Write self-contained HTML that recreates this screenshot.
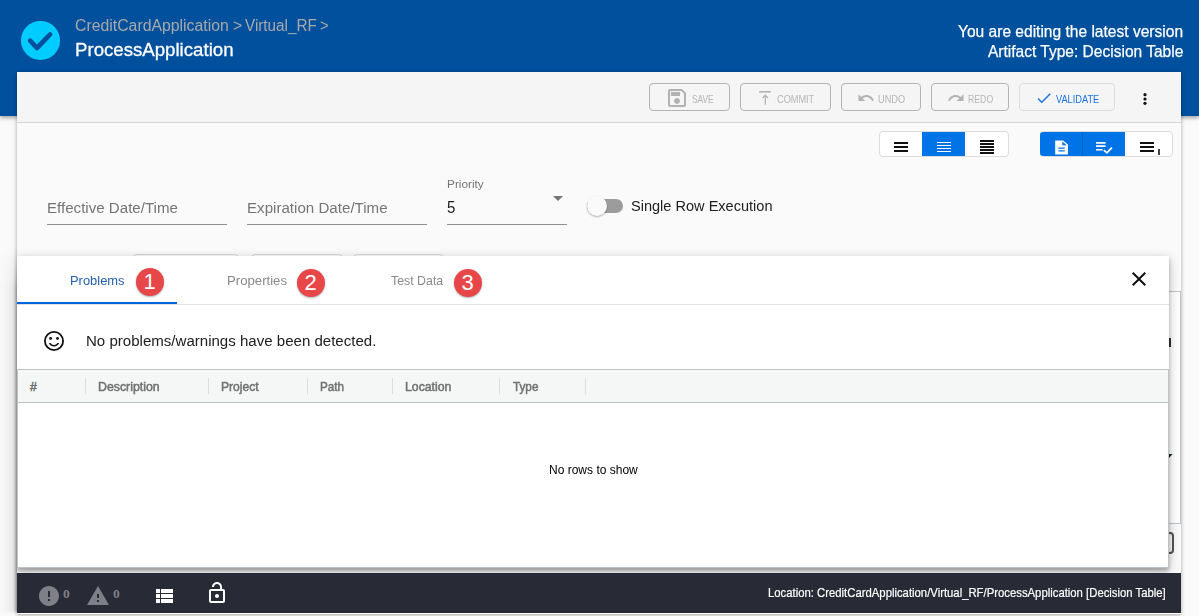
<!DOCTYPE html>
<html lang="en"><head><meta charset="utf-8"><title>ProcessApplication - Decision Table</title>
<style>
html,body{margin:0;padding:0}
body{width:1199px;height:616px;overflow:hidden;background:#fafafa;position:relative;font-family:"Liberation Sans",sans-serif}
.abs,.t{position:absolute}
.t{white-space:nowrap;line-height:1;transform-origin:0 0;letter-spacing:0}
#header{left:0;top:0;width:1199px;height:116px;background:#00509e;box-shadow:0 2px 4px rgba(0,0,0,.35)}
#logo{left:21px;top:21px;width:38.500px;height:38.500px;border-radius:50%;background:#00ccff}
#card{left:17px;top:72px;width:1164px;height:542px;background:#fafafa;box-shadow:0 1px 4px rgba(0,0,0,.35)}
#toolbar{left:0;top:0;width:1164px;height:50px;background:#f5f5f5;border-bottom:1px solid #d6d6d6}
.btn{top:11px;height:26px;border:1px solid #b4b4b4;border-radius:4px;box-sizing:content-box}
.btn.light{border-color:#dcdcdc}
.grp{top:59px;height:24px;border:1px solid #dcdcdc;border-radius:4px;background:#fff}
.grp .seg{position:absolute;top:0;height:24px}
.blue{background:#0073e6}
.line{height:1px;background:#8f8f8f}
.ghost{top:182px;height:10px;border:1px solid #d8d8d8;border-radius:4px;background:#fafafa}
#sheet{left:0;top:246px;width:17px;height:368px;background:linear-gradient(to right,rgba(0,0,0,.008) .5px,rgba(0,0,0,.02) 4.5px,rgba(0,0,0,.04) 8.5px,rgba(0,0,0,.055) 10.5px,rgba(0,0,0,.07) 12.5px,rgba(0,0,0,.10) 13.5px,rgba(0,0,0,.14) 14.5px,rgba(0,0,0,.21) 15.5px,rgba(0,0,0,.28) 16.5px,rgba(0,0,0,.3) 17px);-webkit-mask-image:linear-gradient(to bottom,transparent 0,rgba(0,0,0,.25) 10px,#000 44px,#000 364px,transparent 368px);mask-image:linear-gradient(to bottom,transparent 0,rgba(0,0,0,.25) 10px,#000 44px,#000 364px,transparent 368px)}
#panel{left:17px;top:256px;width:1152px;height:312px;background:#fff;box-shadow:0 3px 10px rgba(0,0,0,.27),0 3px 3px rgba(0,0,0,.2);clip-path:inset(-20px -20px -20px 0)}
#tabline{left:0;top:48px;width:1152px;height:1px;background:#e2e2e2}
#ink{left:0;top:46px;width:160px;height:2px;background:#0565e0}
.badge{width:28px;height:28px;border-radius:50%;background:#e8474a;box-shadow:0 1px 2px rgba(0,40,40,.35);color:#fff;font-size:22px;line-height:28px;text-align:center}
#grid{left:0;top:113px;width:1152px;height:199px;border:1px solid #bdc3c7;box-sizing:border-box}
#ghead{left:0;top:0;width:1150px;height:32px;background:#f5f7f7;border-bottom:1px solid #bdc3c7}
.sep{top:8px;width:1px;height:16px;background:#dadde0}
#status{left:17px;top:573px;width:1164px;height:40px;background:#282a36}
svg{position:absolute;overflow:visible}

</style></head>
<body>
<div id="header" class="abs">
  <div id="logo" class="abs"><svg width="38" height="38" viewBox="0 0 38 38" style="left:0;top:0"><path d="M9.100 19.700L15.900 27L29.100 13.400" fill="none" stroke="#00509e" stroke-width="4.700" stroke-linecap="round" stroke-linejoin="round"/></svg></div>
</div>
<div id="card" class="abs">
  <div id="toolbar" class="abs">
    <div class="btn abs" style="left:632px;width:79px"></div>
    <div class="btn abs" style="left:723px;width:89px"></div>
    <div class="btn abs" style="left:824px;width:78px"></div>
    <div class="btn abs" style="left:914px;width:76px"></div>
    <div class="btn light abs" style="left:1002px;width:94px"></div>
    <svg width="24" height="24" viewBox="0 0 24 24" style="left:648px;top:14px" fill="#b2b2b2"><path d="M17 3H5c-1.11 0-2 .9-2 2v14c0 1.1.89 2 2 2h14c1.1 0 2-.9 2-2V7l-4-4zm2 16H5V5h11.17L19 7.83V19zm-7-7c-1.66 0-3 1.34-3 3s1.34 3 3 3 3-1.34 3-3-1.34-3-3-3zM6 6h9v4H6z"/></svg>
    <svg width="18" height="18" viewBox="0 0 18 18" style="left:739px;top:16px" fill="none" stroke="#b2b2b2"><path d="M3.2 3.8h11.6" stroke-width="1.6"/><path d="M9.3 7.2v9.500M6.600 10l2.700-2.800 2.700 2.800" stroke-width="1.2"/></svg>
    <svg width="18" height="18" viewBox="0 0 24 24" style="left:839.5px;top:17px" fill="#b2b2b2"><path d="M12.5 8c-2.65 0-5.05.99-6.9 2.6L2 7v9h9l-3.62-3.62c1.39-1.16 3.16-1.88 5.12-1.88 3.54 0 6.55 2.31 7.6 5.5l2.37-.78C21.08 11.03 17.15 8 12.5 8z"/></svg>
    <svg width="18" height="18" viewBox="0 0 24 24" style="left:930.1px;top:17px" fill="#b2b2b2"><path d="M18.4 10.6C16.55 8.99 14.15 8 11.5 8c-4.65 0-8.58 3.03-9.96 7.22L3.9 16c1.05-3.19 4.05-5.5 7.6-5.5 1.95 0 3.73.72 5.12 1.88L13 16h9V7l-3.6 3.6z"/></svg>
    <svg width="18" height="18" viewBox="0 0 24 24" style="left:1018.1px;top:17.1px" fill="#1a73e8"><path d="M9 16.17L4.83 12l-1.42 1.41L9 19 21 7l-1.41-1.41z"/></svg>
    <svg width="18" height="18" viewBox="0 0 18 18" style="left:1118.8px;top:18px" fill="#111"><circle cx="9" cy="4.7" r="1.6"/><circle cx="9" cy="9" r="1.6"/><circle cx="9" cy="13.3" r="1.6"/></svg>
  </div>
  <div class="grp abs" style="left:862px;width:128px">
    <div class="seg blue" style="left:42px;width:43px"></div>
    <div class="abs" style="left:14px;top:10px;width:14px;height:2px;background:#111"></div><div class="abs" style="left:14px;top:14px;width:14px;height:2px;background:#111"></div><div class="abs" style="left:14px;top:18px;width:14px;height:2px;background:#111"></div>
    <div class="abs" style="left:57px;top:10px;width:14px;height:1px;background:#fff"></div><div class="abs" style="left:57px;top:13px;width:14px;height:1px;background:#fff"></div><div class="abs" style="left:57px;top:16px;width:14px;height:1px;background:#fff"></div><div class="abs" style="left:57px;top:19px;width:14px;height:1px;background:#fff"></div>
    <div class="abs" style="left:100px;top:8px;width:14px;height:2px;background:#111"></div><div class="abs" style="left:100px;top:11px;width:14px;height:2px;background:#111"></div><div class="abs" style="left:100px;top:14px;width:14px;height:2px;background:#111"></div><div class="abs" style="left:100px;top:17px;width:14px;height:2px;background:#111"></div><div class="abs" style="left:100px;top:20px;width:14px;height:2px;background:#111"></div>
  </div>
  <div class="grp abs" style="left:1023px;width:131px">
    <div class="seg blue" style="left:-1px;width:85px;border-radius:3px 0 0 3px"></div>
    <div class="seg" style="left:41px;width:1px;background:#0062c4"></div>
    <svg width="19.1" height="16.8" viewBox="0 0 24 24" preserveAspectRatio="none" style="left:10.6px;top:6.6px" fill="#fff"><path fill-rule="evenodd" d="M4 2h10l6 6v14H4V2zm9 1.500V9h5.500L13 3.500zM8 12v2h8v-2H8zm0 4v2h8v-2H8z"/></svg>
    <svg width="20" height="16" viewBox="0 0 20 16" style="left:53px;top:8px" fill="none" stroke="#fff"><path d="M2 2.9h9.6M2 6.1h9.6M2 9.7h6.5" stroke-width="1.6"/><path d="M9.8 10.2l3.1 2.6l5-5.2" stroke-width="1.7"/></svg>
    <div class="abs" style="left:99px;top:10px;width:14px;height:2px;background:#111"></div><div class="abs" style="left:99px;top:14px;width:14px;height:2px;background:#111"></div><div class="abs" style="left:99px;top:18px;width:14px;height:2px;background:#111"></div>
    <div class="abs" style="left:117px;top:16.5px;width:2px;height:4px;background:#444"></div><div class="abs" style="left:117px;top:21.30000000000001px;width:2px;height:1.4px;background:#444"></div>
  </div>
  <div class="line abs" style="left:30px;top:152px;width:180px"></div>
  <div class="line abs" style="left:230px;top:152px;width:180px"></div>
  <div class="line abs" style="left:430px;top:152px;width:120px"></div>
  <svg width="10" height="5" viewBox="0 0 10 5" style="left:536px;top:124px"><path d="M0 0h10L5 5z" fill="#757575"/></svg>
  <div class="abs" style="left:570px;top:127px;width:36px;height:14px;border-radius:7px;background:#9c9c9c"></div>
  <div class="abs" style="left:570px;top:124px;width:20px;height:20px;border-radius:50%;background:#fafafa;box-shadow:0 1px 2px rgba(0,0,0,.3)"></div>
  <div class="ghost abs" style="left:116px;width:104px"></div>
  <div class="ghost abs" style="left:234px;width:90px"></div>
  <div class="ghost abs" style="left:336px;width:89px"></div>
</div>
<div class="abs" style="left:1100px;top:291px;width:79px;height:231px;border:1px solid #bdc3c7;background:#fff"></div>
<div class="abs" style="left:1165px;top:338px;width:6px;height:9px;border:2px solid #333;border-left:0;box-sizing:border-box"></div>
<svg width="4" height="4" viewBox="0 0 4 4" style="left:1169px;top:454px"><path d="M0 0h3.600L0 4z" fill="#223"/></svg>
<div class="abs" style="left:1140px;top:532px;width:30px;height:18px;border:2px solid #555;border-radius:4px"></div>
<div id="sheet" class="abs"></div>
<div id="panel" class="abs">
  <div id="tabline" class="abs"></div>
  <div id="ink" class="abs"></div>
  <div class="badge abs" style="left:118.5px;top:11.5px">1</div>
  <div class="badge abs" style="left:279.5px;top:12.5px">2</div>
  <div class="badge abs" style="left:436.7px;top:12.5px">3</div>
  <svg width="24" height="24" viewBox="0 0 24 24" style="left:25px;top:73px"><circle cx="12" cy="12" r="9.100" fill="none" stroke="#111" stroke-width="1.800"/><circle cx="8.600" cy="9.400" r="1.450" fill="#111"/><circle cx="15.500" cy="9.400" r="1.450" fill="#111"/><path d="M12 16c-1.480 0-2.750-.81-3.450-2H6.880c.8 2.050 2.790 3.500 5.120 3.500s4.320-1.450 5.120-3.500h-1.670c-.7 1.190-1.970 2-3.450 2z" fill="#111"/></svg>
  <svg width="24" height="24" viewBox="0 0 24 24" style="left:1110px;top:11px"><path d="M19 6.410L17.590 5 12 10.590 6.410 5 5 6.410 10.590 12 5 17.590 6.410 19 12 13.410 17.590 19 19 17.590 13.410 12z" fill="#111"/></svg>
  <div id="grid" class="abs">
  <div id="ghead" class="abs">
      <div class="sep abs" style="left:67px"></div>
      <div class="sep abs" style="left:190px"></div>
      <div class="sep abs" style="left:289px"></div>
      <div class="sep abs" style="left:374px"></div>
      <div class="sep abs" style="left:481px"></div>
      <div class="sep abs" style="left:567px"></div>
  </div>
  </div>
</div>
<div class="abs" style="left:17px;top:613px;width:1164px;height:1px;background:#fff"></div>
<div id="status" class="abs">
  <svg width="24" height="24" viewBox="0 0 24 24" style="left:19.5px;top:11px" fill="#7f8087"><path d="M12 2C6.480 2 2 6.480 2 12s4.480 10 10 10 10-4.480 10-10S17.520 2 12 2zm1 15h-2v-2h2v2zm0-4h-2V7h2v6z"/></svg>
  <svg width="24" height="24" viewBox="0 0 24 24" style="left:69.3px;top:10.8px" fill="#7f8087"><path d="M1 21h22L12 2 1 21zm12-3h-2v-2h2v2zm0-4h-2v-4h2v4z"/></svg>
  <svg width="24" height="24" viewBox="0 0 24 24" style="left:134.5px;top:10.5px" fill="#fff"><path d="M4 14h4v-4H4v4zm0 5h4v-4H4v4zM4 9h4V5H4v4zm5 5h12v-4H9v4zm0 5h12v-4H9v4zM9 5v4h12V5H9z"/></svg>
  <svg width="24" height="24" viewBox="0 0 24 24" style="left:187.5px;top:8px" fill="#fff"><path d="M12 17c1.100 0 2-.9 2-2s-.9-2-2-2-2 .9-2 2 .9 2 2 2zm6-9h-1V6c0-2.760-2.240-5-5-5S7 3.240 7 6h1.900c0-1.710 1.390-3.100 3.100-3.100 1.710 0 3.100 1.390 3.100 3.100v2H6c-1.100 0-2 .9-2 2v10c0 1.100.9 2 2 2h12c1.100 0 2-.9 2-2V10c0-1.100-.9-2-2-2zm0 12H6V10h12v10z"/></svg>
</div>

<div id="texts">
<span class="t" id="t0" style="left:75.2px;top:17px;font-size:17.3px;color:#a9a9a9;font-weight:400;transform:scaleX(0.9149);">CreditCardApplication</span>
<span class="t" id="t1" style="left:232.5px;top:17px;font-size:17.3px;color:#a9a9a9;font-weight:400;transform:scaleX(0.9200);">&gt;</span>
<span class="t" id="t2" style="left:245.0px;top:17px;font-size:17.3px;color:#a9a9a9;font-weight:400;transform:scaleX(0.8827);">Virtual_RF</span>
<span class="t" id="t3" style="left:319.5px;top:17px;font-size:17.3px;color:#a9a9a9;font-weight:400;transform:scaleX(0.8600);">&gt;</span>
<span class="t" id="t4" style="left:75.3px;top:40px;font-size:19.0px;color:#ffffff;font-weight:400;transform:scaleX(0.9809);-webkit-text-stroke:0.3px #fff;">ProcessApplication</span>
<span class="t" id="t5" style="left:958.2px;top:23px;font-size:17.0px;color:#ffffff;font-weight:400;transform:scaleX(0.9146);-webkit-text-stroke:0.25px #fff;">You are editing the latest version</span>
<span class="t" id="t6" style="left:987.8px;top:43px;font-size:17.0px;color:#ffffff;font-weight:400;transform:scaleX(0.9131);-webkit-text-stroke:0.25px #fff;">Artifact Type: Decision Table</span>
<span class="t" id="t7" style="left:692.0px;top:94px;font-size:11.5px;color:#b6b6b6;font-weight:400;transform:scaleX(0.7233);">SAVE</span>
<span class="t" id="t8" style="left:776.7px;top:94px;font-size:11.5px;color:#b6b6b6;font-weight:400;transform:scaleX(0.7979);">COMMIT</span>
<span class="t" id="t9" style="left:877.5px;top:94px;font-size:11.5px;color:#b6b6b6;font-weight:400;transform:scaleX(0.8000);">UNDO</span>
<span class="t" id="t10" style="left:967.5px;top:94px;font-size:11.5px;color:#b6b6b6;font-weight:400;transform:scaleX(0.7576);">REDO</span>
<span class="t" id="t11" style="left:1055.7px;top:94px;font-size:11.5px;color:#1a73e8;font-weight:400;transform:scaleX(0.8019);">VALIDATE</span>
<span class="t" id="t12" style="left:47.0px;top:200px;font-size:15.4px;color:#757575;font-weight:400;transform:scaleX(0.9812);">Effective Date/Time</span>
<span class="t" id="t13" style="left:247.0px;top:200px;font-size:15.4px;color:#757575;font-weight:400;transform:scaleX(0.9825);">Expiration Date/Time</span>
<span class="t" id="t14" style="left:447.3px;top:178px;font-size:11.6px;color:#757575;font-weight:400;transform:scaleX(1.0194);">Priority</span>
<span class="t" id="t15" style="left:446.8px;top:199px;font-size:16.2px;color:#212121;font-weight:400;transform:scaleX(0.9333);">5</span>
<span class="t" id="t16" style="left:631.2px;top:198px;font-size:15.4px;color:#212121;font-weight:400;transform:scaleX(0.9453);">Single Row Execution</span>
<span class="t" id="t17" style="left:69.7px;top:274px;font-size:13.4px;color:#235fab;font-weight:400;transform:scaleX(0.9649);">Problems</span>
<span class="t" id="t18" style="left:226.7px;top:274px;font-size:13.4px;color:#8a8a8a;font-weight:400;transform:scaleX(0.9836);">Properties</span>
<span class="t" id="t19" style="left:390.7px;top:274px;font-size:13.4px;color:#8a8a8a;font-weight:400;transform:scaleX(0.9228);">Test Data</span>
<span class="t" id="t20" style="left:85.9px;top:333px;font-size:15.4px;color:#212121;font-weight:400;transform:scaleX(0.9781);">No problems/warnings have been detected.</span>
<span class="t" id="t21" style="left:30.0px;top:381px;font-size:12.2px;color:#757575;font-weight:400;transform:scaleX(1.0000);-webkit-text-stroke:0.5px #707070;">#</span>
<span class="t" id="t22" style="left:98.3px;top:381px;font-size:12.2px;color:#757575;font-weight:400;transform:scaleX(1.0115);-webkit-text-stroke:0.5px #707070;">Description</span>
<span class="t" id="t23" style="left:221.0px;top:381px;font-size:12.2px;color:#757575;font-weight:400;transform:scaleX(0.9921);-webkit-text-stroke:0.5px #707070;">Project</span>
<span class="t" id="t24" style="left:320.0px;top:381px;font-size:12.2px;color:#757575;font-weight:400;transform:scaleX(0.9600);-webkit-text-stroke:0.5px #707070;">Path</span>
<span class="t" id="t25" style="left:405.0px;top:381px;font-size:12.2px;color:#757575;font-weight:400;transform:scaleX(1.0065);-webkit-text-stroke:0.5px #707070;">Location</span>
<span class="t" id="t26" style="left:512.5px;top:381px;font-size:12.2px;color:#757575;font-weight:400;transform:scaleX(0.9615);-webkit-text-stroke:0.5px #707070;">Type</span>
<span class="t" id="t27" style="left:548.8px;top:464px;font-size:12.2px;color:#000000;font-weight:400;transform:scaleX(0.9856);">No rows to show</span>
<span class="t" id="t28" style="left:63.0px;top:587px;font-size:13.5px;color:#7f8087;font-weight:700;transform:scaleX(1.0000);font-family:'Liberation Serif',serif;">0</span>
<span class="t" id="t29" style="left:113.0px;top:587px;font-size:13.5px;color:#7f8087;font-weight:700;transform:scaleX(1.0000);font-family:'Liberation Serif',serif;">0</span>
<span class="t" id="t30" style="left:767.6px;top:587px;font-size:12.2px;color:#ffffff;font-weight:400;transform:scaleX(0.9285);-webkit-text-stroke:0.2px #fff;">Location: CreditCardApplication/Virtual_RF/ProcessApplication [Decision Table]</span>
</div>
</body></html>
